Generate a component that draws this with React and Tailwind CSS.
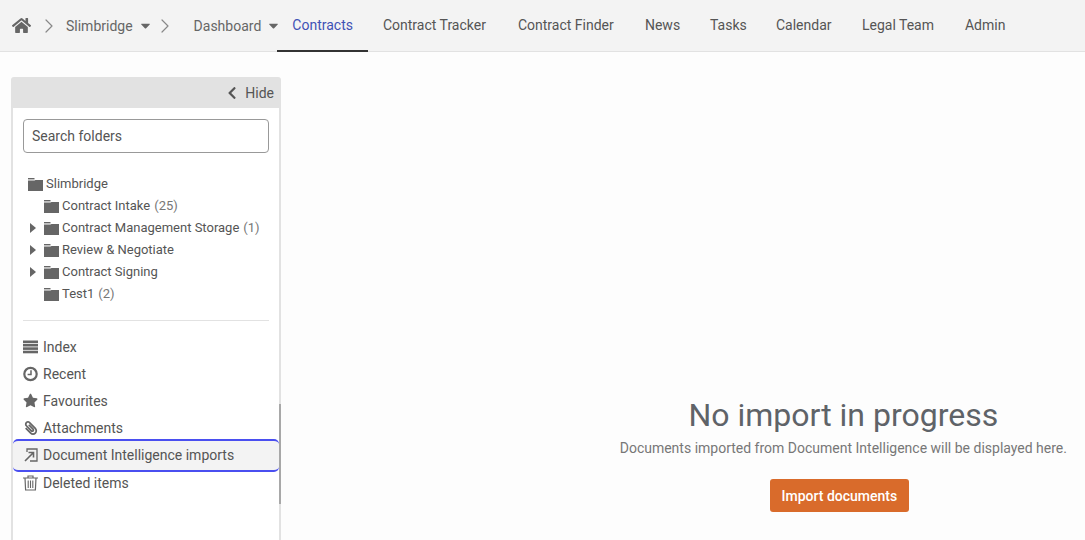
import { FaHome, FaChevronLeft, FaStar, FaPaperclip, FaCaretDown } from 'react-icons/fa'
import { LuChevronRight } from 'react-icons/lu'

const TABS = [
  { label: 'Contract Tracker', width: 'w-[135px]' },
  { label: 'Contract Finder', width: 'w-[127px]' },
  { label: 'News', width: 'w-[65px]' },
  { label: 'Tasks', width: 'w-[66px]' },
  { label: 'Calendar', width: 'w-[86px]' },
  { label: 'Legal Team', width: 'w-[103px]' },
  { label: 'Admin', width: 'w-[70px]' },
]

const FOLDERS = [
  { label: 'Contract Intake', count: '(25)' },
  { label: 'Contract Management Storage', count: '(1)', arrow: true },
  { label: 'Review & Negotiate', arrow: true },
  { label: 'Contract Signing', arrow: true },
  { label: 'Test1', count: '(2)' },
]

function FolderIcon() {
  return (
    <svg width="15" height="13" viewBox="0 0 15 13" className="fill-[#666] shrink-0">
      <rect x="0" y="0" width="6.5" height="1.4" />
      <path d="M0 2.6h6.5l1-.6H15v11H0z" />
    </svg>
  )
}

function ArrowIcon() {
  return (
    <svg width="6" height="10" viewBox="0 0 6 10" className="fill-[#666]">
      <path d="M0 0l6 5-6 5z" />
    </svg>
  )
}

function IndexIcon() {
  return (
    <svg width="15" height="14" viewBox="0 0 15 14" className="fill-[#666]">
      <rect x="0" y="0.5" width="15" height="2.6" />
      <rect x="0" y="3.9" width="15" height="2.6" />
      <rect x="0" y="7.3" width="15" height="2.6" />
      <rect x="0" y="10.7" width="15" height="2.6" />
    </svg>
  )
}

function ClockIcon() {
  return (
    <svg width="16" height="16" viewBox="0 0 15 15" fill="none" className="stroke-[#666]">
      <circle cx="7.5" cy="7.5" r="6.2" strokeWidth="2.2" />
      <path d="M8 3.8V8H4.6" strokeWidth="1.5" />
    </svg>
  )
}

function ImportIcon() {
  return (
    <svg width="14" height="14" viewBox="0 0 14 14" fill="none" className="stroke-[#666]">
      <path d="M3 4V1h10v12H6" strokeWidth="1.3" />
      <path d="M1 13L9.5 4.5M4.5 4.5h5v5" strokeWidth="1.6" />
    </svg>
  )
}

function TrashIcon() {
  return (
    <svg width="15" height="16" viewBox="0 0 15 16" fill="none" className="stroke-[#666]">
      <path d="M0 3h15M5 3V1h5v2" strokeWidth="1.2" />
      <path d="M2 3l.6 12h9.8L13 3" strokeWidth="1.2" />
      <path d="M5.2 5.5v7.5M7.5 5.5v7.5M9.8 5.5v7.5" strokeWidth="1.1" />
    </svg>
  )
}

function NavItem({ icon, label, active }) {
  if (active) {
    return (
      <div className="-mx-[10px] -mt-[2px] -mb-[3px] h-[33px] flex items-center gap-[5px] pl-[10px] pb-[2px] bg-[#f3f3f3] border-y-2 border-[#4a4ff0] rounded-[5px]">
        <span className="w-[15px] flex justify-center">{icon}</span>
        <span>{label}</span>
      </div>
    )
  }
  return (
    <div className="h-[27px] flex items-center gap-[5px]">
      <span className="w-[15px] flex justify-center">{icon}</span>
      <span>{label}</span>
    </div>
  )
}

export default function App() {
  return (
    <div className="w-[1085px] h-[540px] overflow-hidden bg-[#fdfdfd] text-[#555] font-['Roboto',sans-serif] text-sm">
      {/* Top nav */}
      <header className="h-[52px] bg-[#f3f3f3] border-b border-[#e2e2e2] flex pl-3">
        <div className="flex items-center h-[51px] text-[#666]">
          <FaHome className="text-[19px] text-[#666]" />
          <LuChevronRight className="text-[24px] text-[#888] ml-[6px] mr-[5px]" strokeWidth={1.2} />
          <span>Slimbridge</span>
          <FaCaretDown className="text-[15px] ml-[5px] mr-[3px]" />
          <LuChevronRight className="text-[24px] text-[#888] -ml-[3px] mr-[17px]" strokeWidth={1.2} />
          <span>Dashboard</span>
          <FaCaretDown className="text-[15px] ml-[5px] -mr-[4px]" />
        </div>
        <div className="flex h-[52px]">
          <div className="px-[15px] flex items-center text-[#3f51b5] border-b-2 border-[#333] pb-[1px]">Contracts</div>
          {TABS.map(tab => (
            <div key={tab.label} className={`${tab.width} pl-[15px] flex items-center pb-[2px] whitespace-nowrap`}>{tab.label}</div>
          ))}
        </div>
      </header>

      <div className="flex">
        {/* Sidebar */}
        <aside className="relative ml-[11px] mt-[25px] w-[270px] h-[463px] flex flex-col">
          <div className="h-[31px] bg-[#e2e2e2] rounded-t-[3px] flex items-center justify-end gap-[6px] pr-[7px] shrink-0">
            <FaChevronLeft className="text-[14px] text-[#555]" />
            <span>Hide</span>
          </div>
          <div className="flex-1 bg-white border-x-2 border-[#e2e2e2] px-[10px] pt-[11px]">
            <div className="h-[34px] border border-[#999] rounded-[4px] flex items-center px-2">Search folders</div>

            <div className="mt-[20px] pb-[15px] border-b border-[#e2e2e2] text-[13px]">
              <div className="h-[22px] flex items-center gap-[3px] pl-[5px]">
                <FolderIcon />
                <span>Slimbridge</span>
              </div>
              {FOLDERS.map(f => (
                <div key={f.label} className="h-[22px] flex items-center">
                  <span className="w-[21px] flex justify-start pl-[7px]">
                    {f.arrow && <ArrowIcon />}
                  </span>
                  <span className="mr-[3px]"><FolderIcon /></span>
                  <span>{f.label}</span>
                  {f.count && <span className="ml-1 text-[#777]">{f.count}</span>}
                </div>
              ))}
            </div>

            <nav className="mt-[12px]">
              <NavItem icon={<IndexIcon />} label="Index" />
              <NavItem icon={<ClockIcon />} label="Recent" />
              <NavItem icon={<FaStar className="text-[15px] text-[#666]" />} label="Favourites" />
              <NavItem icon={<FaPaperclip className="text-[14px] text-[#666] -scale-x-100" />} label="Attachments" />
              <NavItem active icon={<ImportIcon />} label="Document Intelligence imports" />
              <NavItem icon={<TrashIcon />} label="Deleted items" />
            </nav>
          </div>
          {/* scrollbar thumb */}
          <div className="absolute right-0 top-[327px] w-[2px] h-[100px] bg-[#a8a8a8]" />
        </aside>

        {/* Empty state */}
        <main className="flex-1 flex flex-col items-end pr-[18px] pt-[344px]">
          <div className="flex flex-col items-center">
            <h1 className="text-[32px] leading-[38px] text-[#5f6368]">No import in progress</h1>
            <p className="mt-[4px] leading-[20px] text-[#777]">Documents imported from Document Intelligence will be displayed here.</p>
            <button className="mt-[21px] mr-2 h-[33px] w-[139px] rounded-[3px] bg-[#d96b2b] text-white font-medium">Import documents</button>
          </div>
        </main>
      </div>
    </div>
  )
}
